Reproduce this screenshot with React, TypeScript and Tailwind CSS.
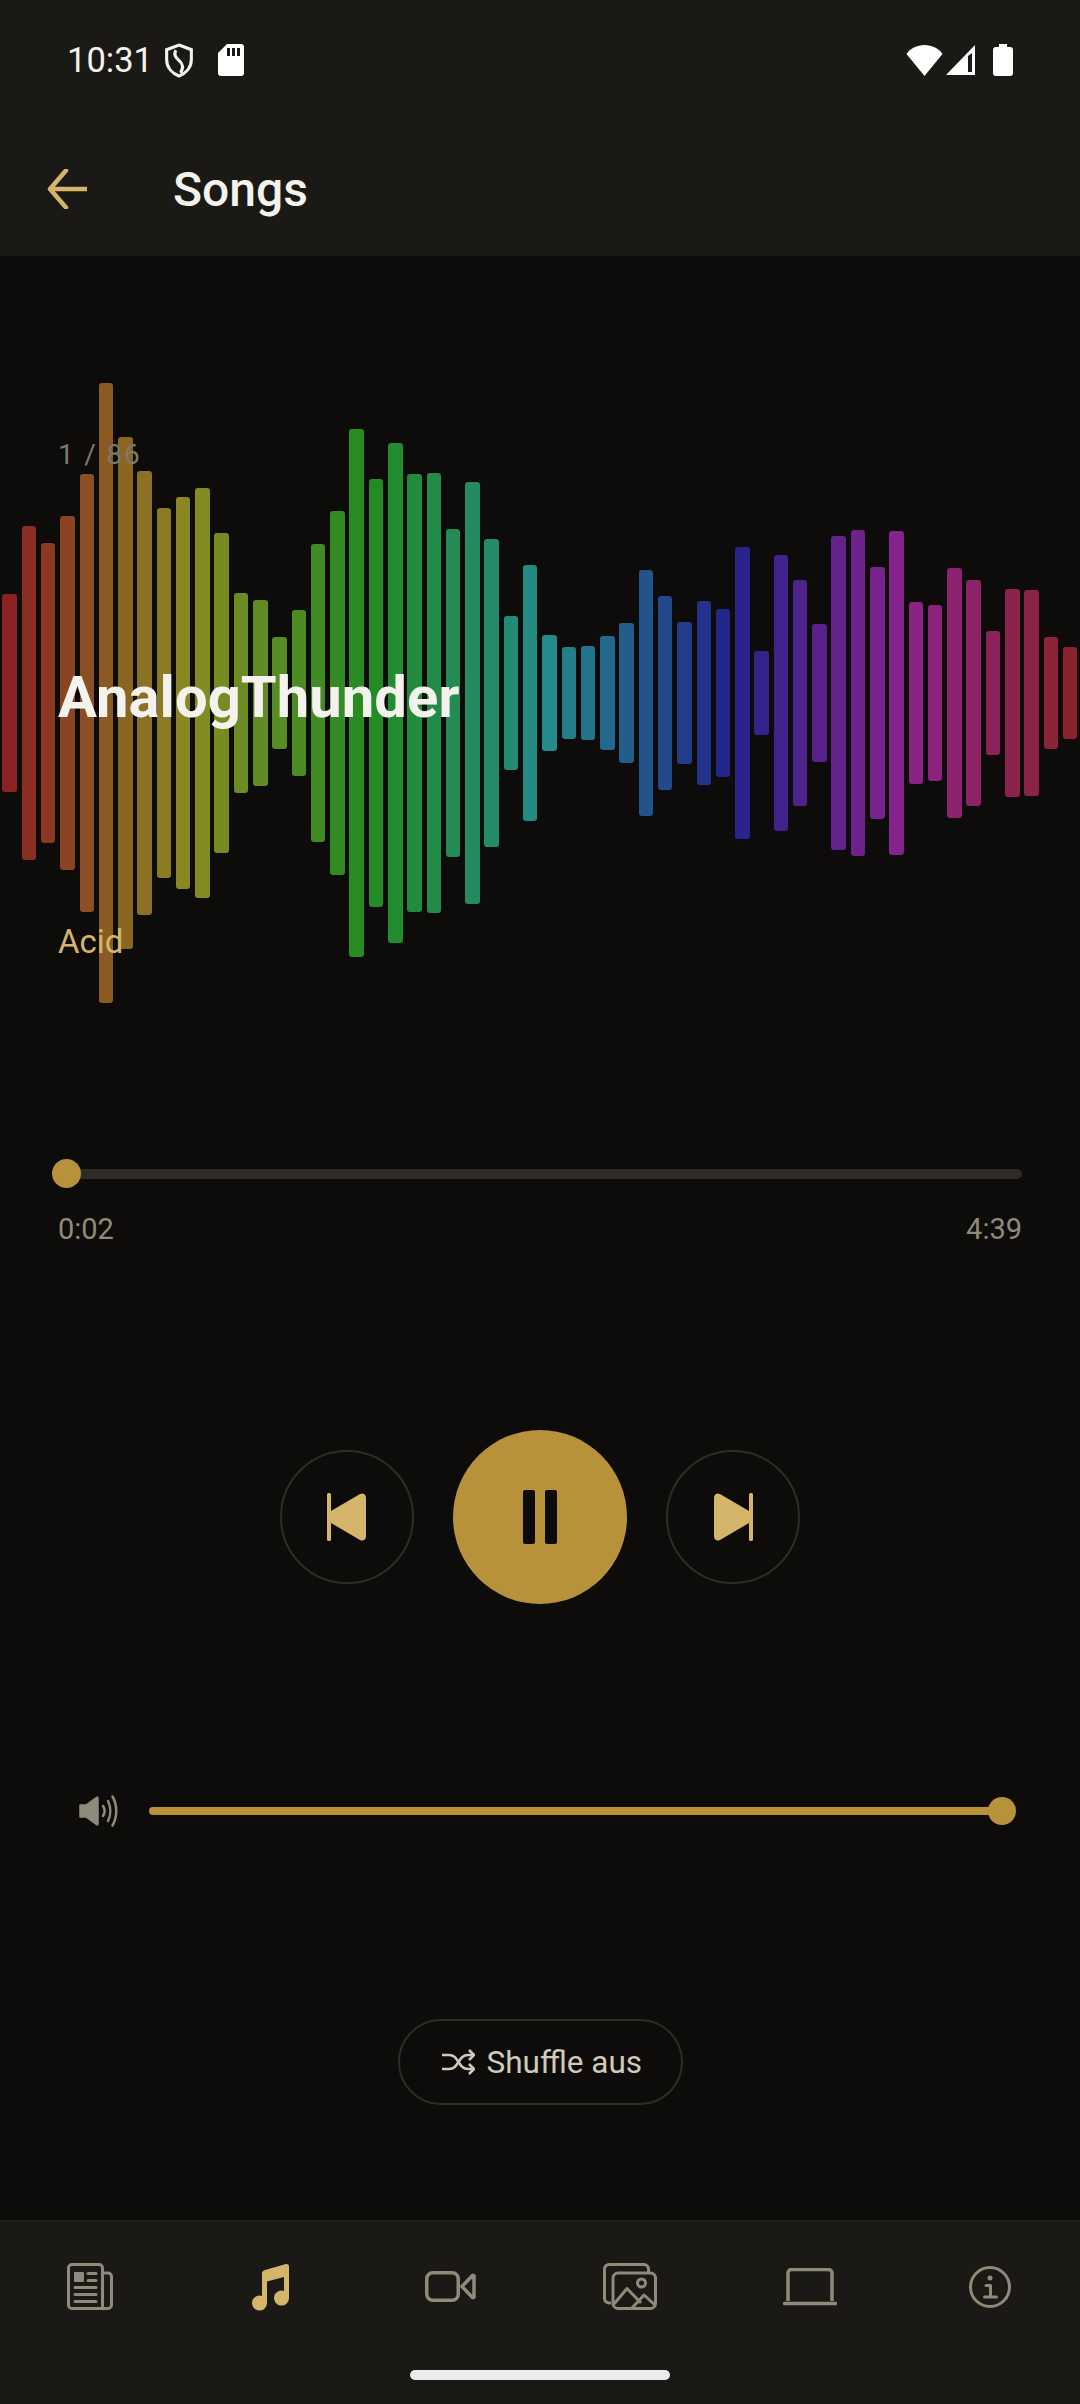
// Player screen: header, waveform with track info, transport, volume, shuffle, bottom nav
const BARS: [number, number][] = [
  [542, 1018], [377, 1183], [418, 1142], [352, 1208], [252, 1308], [33, 1527], [164, 1397],
  [245, 1316], [334, 1226], [307, 1252], [287, 1274], [394, 1166], [538, 1022], [556, 1005],
  [645, 915], [579, 981], [421, 1140], [342, 1219], [143, 1417], [263, 1297], [177, 1384],
  [251, 1309], [250, 1310], [386, 1175], [271, 1290], [409, 1151], [594, 966], [471, 1089],
  [641, 919], [670, 891], [666, 895], [642, 919], [612, 948], [484, 1076], [546, 1015],
  [608, 952], [559, 1001], [577, 983], [428, 1132], [679, 882], [448, 1112], [507, 1053],
  [615, 946], [401, 1159], [387, 1173], [477, 1083], [389, 1170], [561, 999], [568, 993],
  [478, 1082], [509, 1052], [631, 929], [528, 1032], [531, 1030], [644, 916], [669, 891],
];

function Waveform() {
  return (
    <div className="absolute inset-0 flex items-center">
      {BARS.map(([top, bottom], i) => (
        <div key={i} className="flex-1 px-[2.4px]">
          <div
            className="rounded-[3px]"
            style={{
              height: (bottom - top) / 2.412,
              backgroundColor: `hsl(${(i * 360) / 56}, 60%, 34%)`,
            }}
          />
        </div>
      ))}
    </div>
  );
}

function StatusBar() {
  return (
    <div className="flex h-[120px] items-center justify-between pl-[67px] pr-[67px]">
      <div className="flex items-center">
        <span className="text-[34.500px] leading-none text-[#f4f2ec]">10:31</span>
        <svg width="32" height="35" viewBox="0 0 30 34" className="ml-[10px]" fill="none" stroke="#f4f2ec" strokeWidth="3">
          <path d="M15 2 L27 6.500 V16 C27 24 21.500 29.500 15 32 C8.500 29.500 3 24 3 16 V6.500 Z" />
          <path d="M12 7 C9 12 13 15 16 18 C19 21 19 25 16.500 29" />
        </svg>
        <svg width="26" height="32" viewBox="0 0 26 32" className="ml-[23px]">
          <path d="M9 0 H23 a3 3 0 0 1 3 3 V29 a3 3 0 0 1 -3 3 H3 a3 3 0 0 1 -3 -3 V9 Z" fill="#fff" />
          <path d="M9 4 h3 v8 h-3 Z M14 4 h3 v8 h-3 Z M19 4 h3 v8 h-3 Z" fill="#1a1915" />
        </svg>
      </div>
      <div className="flex items-center">
        <svg width="37" height="31" viewBox="0 0 37 31">
          <path d="M18.500 31 L0.500 9 C4 3.500 11 0 18.500 0 C26 0 33 3.500 36.500 9 Z" fill="#fff" />
        </svg>
        <svg width="30" height="30" viewBox="0 0 30 30" className="ml-[3px]">
          <path d="M29 0 V30 H0 Z" fill="#fff" />
          <path d="M22 11 V27 H26 V8 Z" fill="#1a1915" />
        </svg>
        <svg width="20" height="32" viewBox="0 0 20 32" className="ml-[17px]">
          <path d="M6 0 H14 V3 H17 a3 3 0 0 1 3 3 V29 a3 3 0 0 1 -3 3 H3 a3 3 0 0 1 -3 -3 V6 a3 3 0 0 1 3 -3 H6 Z" fill="#fff" />
        </svg>
      </div>
    </div>
  );
}

function Toolbar() {
  return (
    <div className="flex h-[136px] items-start pl-[47px]">
      <svg width="40" height="40" viewBox="0 0 40 40" className="mt-[49px]" fill="none" stroke="#d4b56a" strokeWidth="4.500">
        <path d="M19 1.500 L3 20 L19 38.500" strokeLinecap="round" strokeLinejoin="round" />
        <path d="M3 20 H40" />
      </svg>
      <span className="ml-[86px] mt-[42px] text-[48px] leading-[56px] font-medium text-[#f4f2ec]">Songs</span>
    </div>
  );
}

function TrackInfo() {
  return (
    <section className="relative h-[874px]">
      <Waveform />
      <div className="relative flex flex-col pl-[58px]">
        <span className="mt-[179px] text-[28px] leading-[40px] tracking-[1.800px] text-[#7d796d]">1 / 86</span>
        <span className="mt-[182px] text-[58px] leading-[80px] font-bold text-[#f4f2ec]">AnalogThunder</span>
        <span className="mt-[181px] text-[33px] leading-[48px] text-[#d4b56a]">Acid</span>
      </div>
    </section>
  );
}

function Progress() {
  return (
    <section className="px-[58px] pt-[29px]">
      <div className="relative flex h-[29px] items-center">
        <div className="h-[10px] w-full rounded-full bg-[#2e2b27]" />
        <div className="absolute left-[-6px] h-[29px] w-[29px] rounded-full bg-[#b8923a]" />
      </div>
      <div className="mt-[23px] flex justify-between text-[29px] leading-[36px] text-[#8f8a79]">
        <span>0:02</span>
        <span>4:39</span>
      </div>
    </section>
  );
}

function Transport() {
  return (
    <section className="mt-[183px] flex items-center justify-center gap-[39px]">
      <button className="flex h-[134px] w-[134px] items-center justify-center rounded-full border-2 border-[#2e2c28]">
        <svg width="40" height="48" viewBox="0 0 40 48" fill="#d4b56a">
          <rect x="0" y="0" width="4" height="48" rx="1.500" />
          <path d="M4 18 L33 1 a4 4 0 0 1 6 3.500 V43.500 a4 4 0 0 1 -6 3.500 L4 30 Z" />
        </svg>
      </button>
      <button className="flex h-[174px] w-[174px] items-center justify-center gap-[10px] rounded-full bg-[#b8923a]">
        <div className="h-[54px] w-[12px] rounded-[2px] bg-[#0d0c0b]" />
        <div className="h-[54px] w-[12px] rounded-[2px] bg-[#0d0c0b]" />
      </button>
      <button className="flex h-[134px] w-[134px] items-center justify-center rounded-full border-2 border-[#2e2c28]">
        <svg width="40" height="48" viewBox="0 0 40 48" fill="#d4b56a">
          <rect x="36" y="0" width="4" height="48" rx="1.500" />
          <path d="M36 18 L7 1 a4 4 0 0 0 -6 3.500 V43.500 a4 4 0 0 0 6 3.500 L36 30 Z" />
        </svg>
      </button>
    </section>
  );
}

function Volume() {
  return (
    <section className="mt-[193px] flex h-[28px] items-center pl-[79px] pr-[78px]">
      <svg width="40" height="32" viewBox="0 0 40 32" fill="none" stroke="#8f8a79">
        <path d="M1 10 H7 L18 2 a1 1 0 0 1 1 1 V29 a1 1 0 0 1 -1 1 L7 22 H1 Z" fill="#8f8a79" strokeWidth="1.500" strokeLinejoin="round" />
        <path d="M24 11 C26 14 26 18 24 21" strokeWidth="2.500" strokeLinecap="round" />
        <path d="M29 6 C32 12 32 20 29 26" strokeWidth="2.500" strokeLinecap="round" />
        <path d="M33.500 1.500 C38.500 10 38.500 22 33.500 30.500" strokeWidth="2.500" strokeLinecap="round" />
      </svg>
      <div className="relative ml-[30px] flex h-[28px] flex-1 items-center">
        <div className="h-[8px] w-full rounded-full bg-[#b8923a]" />
        <div className="absolute right-[-14px] h-[28px] w-[28px] rounded-full bg-[#b8923a]" />
      </div>
    </section>
  );
}

function ShufflePill() {
  return (
    <section className="mt-[194px] flex justify-center">
      <button className="flex h-[86px] w-[285px] items-center rounded-full border-2 border-[#2e2c28] pl-[42px]">
        <svg width="33" height="26" viewBox="0 0 33 26" fill="none" stroke="#d0cabb" strokeWidth="2.500" strokeLinejoin="round">
          <path d="M0 6 H7 C12 6 14 9 16.500 13 C19 17 21 20 26 20 H32" />
          <path d="M0 20 H7 C12 20 14 17 16.500 13 C19 9 21 6 26 6 H32" />
          <path d="M27 1 L32 6 L27 11" />
          <path d="M27 15 L32 20 L27 25" />
        </svg>
        <span className="ml-[12px] pt-[2px] text-[31.500px] leading-none text-[#d0cabb]">Shuffle aus</span>
      </button>
    </section>
  );
}

function NewsIcon() {
  return (
    <svg width="46" height="47" viewBox="0 0 46 47" fill="none" stroke="#8f8a79" strokeWidth="3">
      <path d="M36 10 H41 a3.500 3.500 0 0 1 3.500 3.500 V42 a3.500 3.500 0 0 1 -3.500 3.500 H5 a3.500 3.500 0 0 1 -3.500 -3.500 V5 a3.500 3.500 0 0 1 3.500 -3.500 H32 a3.500 3.500 0 0 1 3.500 3.500 V45" />
      <rect x="7" y="9" width="10" height="10" rx="1" fill="#8f8a79" stroke="none" />
      <path d="M21 10.500 H29 M21 17.500 H29 M8 24.500 H29 M8 31.500 H29 M8 38.500 H29" strokeLinecap="round" />
    </svg>
  );
}

function MusicIcon() {
  return (
    <svg width="38" height="48" viewBox="0 0 38 48" fill="#d4b56a">
      <path d="M11 12 a4 4 0 0 1 3 -5 L35 1 a2.500 2.500 0 0 1 3 2.500 V35 a7.500 7.500 0 1 1 -5 -7 V14 L16 18.500 V40 a7.500 7.500 0 1 1 -5 -7 Z" />
    </svg>
  );
}

function VideoIcon() {
  return (
    <svg width="51" height="31" viewBox="0 0 51 31" fill="none" stroke="#8f8a79" strokeWidth="3.500" strokeLinejoin="round">
      <rect x="1.750" y="1.750" width="31.500" height="27.500" rx="6" />
      <path d="M37 15.500 L47 5 a1 1 0 0 1 2 1 V25 a1 1 0 0 1 -2 1 Z" />
    </svg>
  );
}

function GalleryIcon() {
  return (
    <svg width="54" height="47" viewBox="0 0 54 47" fill="none" stroke="#8f8a79" strokeWidth="3" strokeLinejoin="round">
      <path d="M8 40 H6 a4.500 4.500 0 0 1 -4.500 -4.500 V6 a4.500 4.500 0 0 1 4.500 -4.500 H41 a4.500 4.500 0 0 1 4.500 4.500 V9" />
      <rect x="10" y="10" width="42.500" height="35.500" rx="5" />
      <circle cx="38.500" cy="20" r="4" />
      <path d="M11 41 L24 25.500 L38 40" />
      <path d="M29 45 L41 32 L52 42" />
    </svg>
  );
}

function LaptopIcon() {
  return (
    <svg width="54" height="38" viewBox="0 0 54 38" fill="none" stroke="#8f8a79" strokeWidth="3.500" strokeLinejoin="round">
      <path d="M5 33 V5 a3.500 3.500 0 0 1 3.500 -3.500 H45.500 a3.500 3.500 0 0 1 3.500 3.500 V33" />
      <path d="M1.500 35.500 H52.500" strokeLinecap="round" />
    </svg>
  );
}

function InfoIcon() {
  return (
    <svg width="42" height="42" viewBox="0 0 42 42" fill="none" stroke="#8f8a79" strokeWidth="3">
      <circle cx="21" cy="21" r="19.500" />
      <circle cx="21" cy="12" r="2.500" fill="#8f8a79" stroke="none" />
      <path d="M17 19.500 H21.500 V31 M15.500 31 H27.500" strokeLinecap="round" strokeLinejoin="round" />
    </svg>
  );
}

const NAV_ITEMS = [NewsIcon, MusicIcon, VideoIcon, GalleryIcon, LaptopIcon, InfoIcon];

function BottomNav() {
  return (
    <footer className="mt-auto h-[184px] border-t-2 border-[#1f1e1a] bg-[#1a1915]">
      <nav className="mt-[41px] flex h-[47px] items-center">
        {NAV_ITEMS.map((Icon, i) => (
          <div key={i} className="flex flex-1 justify-center">
            <Icon />
          </div>
        ))}
      </nav>
      <div className="mx-auto mt-[60px] h-[10px] w-[260px] rounded-full bg-[#ececec]" />
    </footer>
  );
}

export default function App() {
  return (
    <div className="flex h-[2404px] w-[1080px] flex-col overflow-hidden bg-[#0d0c0b] font-['Roboto',sans-serif]">
      <header className="bg-[#1a1915]">
        <StatusBar />
        <Toolbar />
      </header>
      <TrackInfo />
      <Progress />
      <Transport />
      <Volume />
      <ShufflePill />
      <BottomNav />
    </div>
  );
}
